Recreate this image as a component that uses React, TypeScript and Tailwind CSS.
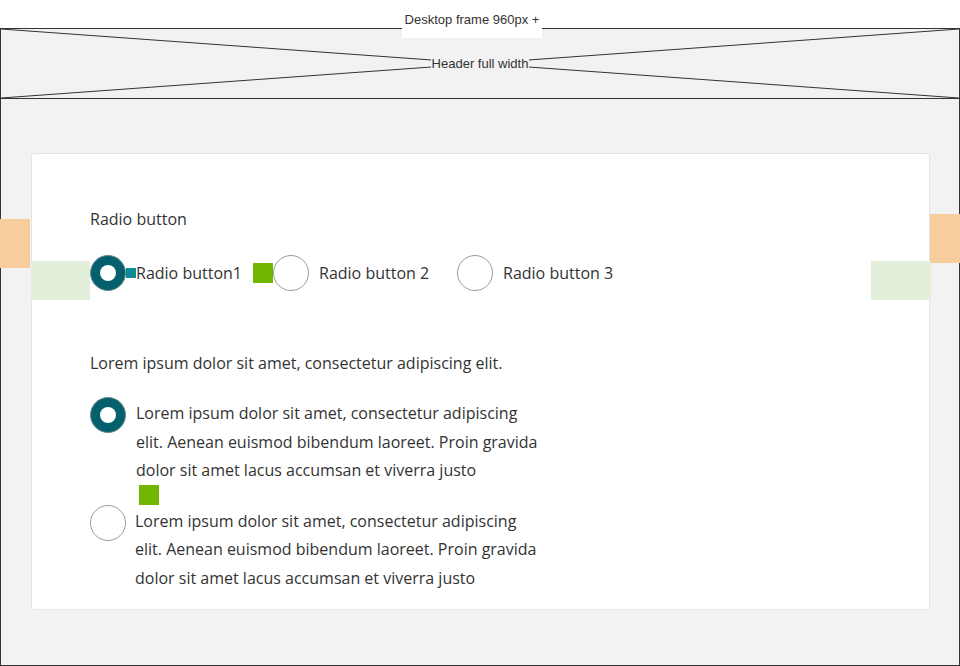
export default function App() {
    const body = "font-['Open_Sans','Noto_Sans',sans-serif] text-[16px] text-[#333333]";

    return (
        <div className="relative w-[960px] h-[666px] bg-white overflow-hidden">
            {/* frame label */}
            <div className="h-[28px] flex justify-center">
                <div className="relative z-10 mr-[16px] w-[140px] h-[38px] bg-white flex justify-center pt-[12px] font-['Liberation_Sans',Arial,sans-serif] text-[13px] leading-[15px] text-[#333333]">
                    Desktop frame 960px +
                </div>
            </div>

            <div className="h-[638px] border border-[#333333] bg-[#f2f2f2] flex flex-col">
                {/* header placeholder */}
                <div className="relative h-[70px] border-b border-[#333333] flex items-center justify-center shrink-0">
                    <svg className="absolute inset-0" width="958" height="69" viewBox="0 0 958 69" preserveAspectRatio="none">
                        <line x1="0" y1="0" x2="958" y2="69" stroke="#333333" strokeWidth="1" />
                        <line x1="0" y1="69" x2="958" y2="0" stroke="#333333" strokeWidth="1" />
                    </svg>
                    <span className="relative bg-[#f2f2f2] px-[1px] font-['Liberation_Sans',Arial,sans-serif] text-[13px] leading-[15px] text-[#333333]">
                        Header full width
                    </span>
                </div>

                <div className="relative flex-1">
                    {/* annotations */}
                    <div className="absolute left-[-1px] top-[120px] w-[30px] h-[49px] bg-[#f8cd9e]" />
                    <div className="absolute left-[929px] top-[115px] w-[31px] h-[49px] bg-[#f8cd9e]" />

                    <div className="mt-[54px] ml-[30px] w-[899px] h-[457px] bg-white border border-[#e4e4e4] rounded-[3px] relative">
                        <div className="absolute left-[-1px] top-[107px] w-[59px] h-[39px] bg-[#e2efda]" />
                        <div className="absolute left-[839px] top-[107px] w-[60px] h-[39px] bg-[#e2efda]" />

                        <div className={`relative pl-[58px] pt-[53px] ${body}`}>
                            <p className="leading-[24px]">Radio button</p>

                            <div className="mt-[24px] flex items-center h-[36px]">
                                <div className="flex items-center">
                                    <RadioOn />
                                    <span className="w-[10px] h-[10px] bg-[#0a8a9b]" />
                                    <span className="w-[117px] leading-[24px] whitespace-nowrap">Radio button1</span>
                                </div>
                                <div className="flex items-center">
                                    <span className="w-[20px] h-[20px] bg-[#70b603]" />
                                    <RadioOff />
                                    <span className="ml-[10px] w-[138px] leading-[24px] whitespace-nowrap">Radio button 2</span>
                                </div>
                                <div className="flex items-center">
                                    <RadioOff />
                                    <span className="ml-[10px] leading-[24px] whitespace-nowrap">Radio button 3</span>
                                </div>
                            </div>

                            <p className="mt-[60px] leading-[24px]">Lorem ipsum dolor sit amet, consectetur adipiscing elit.</p>

                            <div className="mt-[22px] flex">
                                <RadioOn />
                                <p className="ml-[10px] mt-[2px] leading-[28.5px] whitespace-nowrap">
                                    Lorem ipsum dolor sit amet, consectetur adipiscing<br />
                                    elit. Aenean euismod bibendum laoreet. Proin gravida<br />
                                    dolor sit amet lacus accumsan et viverra justo
                                </p>
                            </div>

                            <div className="ml-[49px] w-[20px] h-[20px] bg-[#70b603]" />

                            <div className="flex">
                                <RadioOff />
                                <p className="ml-[9px] mt-[2px] leading-[28.5px] whitespace-nowrap">
                                    Lorem ipsum dolor sit amet, consectetur adipiscing<br />
                                    elit. Aenean euismod bibendum laoreet. Proin gravida<br />
                                    dolor sit amet lacus accumsan et viverra justo
                                </p>
                            </div>
                        </div>
                    </div>
                </div>
            </div>
        </div>
    );
}

function RadioOn() {
    return (
        <span className="w-[36px] h-[36px] shrink-0 rounded-full bg-[#03606c] border border-[#6f8a8e] flex items-center justify-center">
            <span className="w-[16px] h-[16px] rounded-full bg-white" />
        </span>
    );
}

function RadioOff() {
    return <span className="w-[36px] h-[36px] shrink-0 rounded-full bg-white border border-[#999999]" />;
}
